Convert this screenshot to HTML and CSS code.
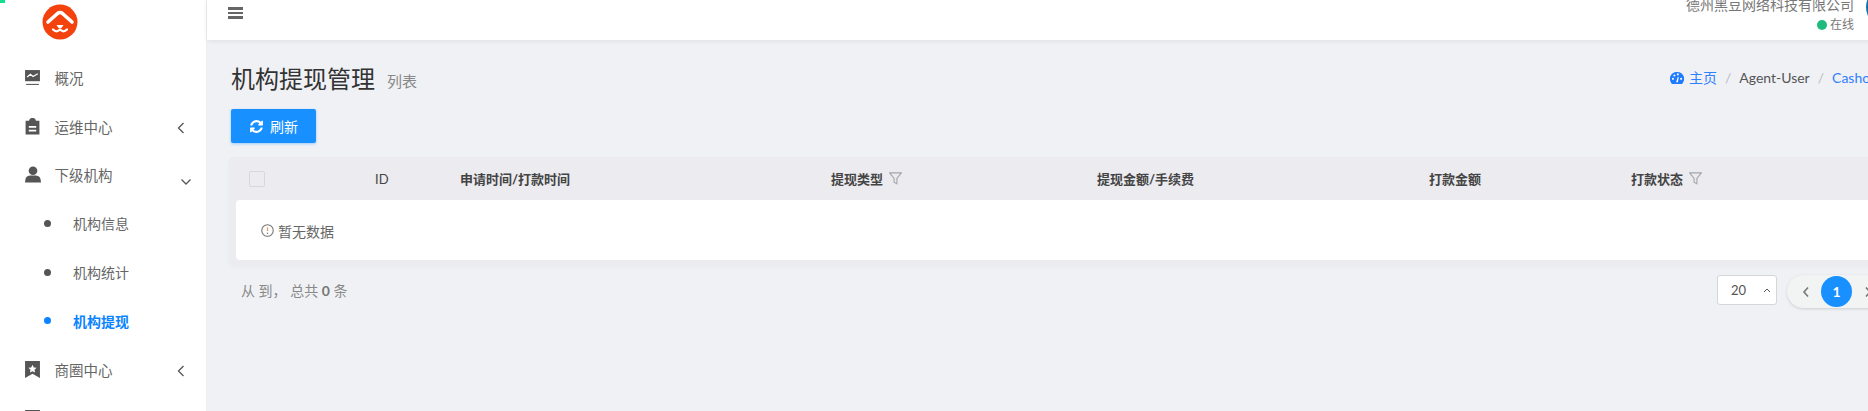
FILE: index.html
```html
<!DOCTYPE html>
<html>
  <head>
    <meta charset="utf-8" />
    <title>机构提现管理</title>
    <link rel="stylesheet" href="styles.css">
  </head>
  <body>
    <div class="progress-bar"></div>
    <div class="app">
      <aside class="sidebar">
        <div class="logo">
          <svg class="logo-mark" viewBox="0 0 36 36">
            <circle cx="18" cy="18" r="17.5" fill="#f4420f" />
            <path d="M6 18 L15.500 9.500 Q18 7.500 20.500 9.500 L30 18" fill="none" stroke="#fff" stroke-width="3.600" stroke-linecap="round" stroke-linejoin="round" />
            <path d="M14.500 21 h7 l-2 3 h-3 z" fill="#fff" />
            <path d="M11 25.500 q3.500 3.600 7 0 q3.500 3.600 7 0" fill="none" stroke="#fff" stroke-width="2.200" stroke-linecap="round" />
          </svg>
        </div>
        <ul class="menu">
          <li class="menu-item">
            <svg class="menu-icon" viewBox="0 0 16 16">
              <path d="M1 1h14v10.500H1z" fill="#555" />
              <path d="M3 7.500 L6 5 L8.500 7 L13 4.500" fill="none" stroke="#fff" stroke-width="1.200" />
              <path d="M2 14h12v1H2z" fill="#555" />
            </svg>
            <span class="menu-label">概况</span>
          </li>
          <li class="menu-item">
            <svg class="menu-icon" viewBox="0 0 16 16">
              <path d="M1.500 2.500h3.200a3.400 3.400 0 0 1 6.600 0h3.200v13h-13z" fill="#555" />
              <path d="M4.500 7.500h7v1.600h-7zM4.500 11h7v1.600h-7z" fill="#fff" />
            </svg>
            <span class="menu-label">运维中心</span>
            <svg class="chevron chevron-left" viewBox="0 0 8 12"><path d="M6.500 1 L1.500 6 L6.500 11" /></svg>
          </li>
          <li class="menu-item">
            <svg class="menu-icon menu-icon-user" viewBox="0 0 18 18">
              <circle cx="9" cy="5" r="4.600" fill="#555" />
              <path d="M0.500 17.500 q0-7.500 5.500-7.500 h6 q5.500 0 5.500 7.500z" fill="#555" />
            </svg>
            <span class="menu-label">下级机构</span>
            <svg class="chevron chevron-down" viewBox="0 0 12 8"><path d="M1.500 1.500 L6 6 L10.500 1.500" /></svg>
          </li>
          <li class="menu-item sub-item"><span class="dot"></span><span class="sub-label">机构信息</span></li>
          <li class="menu-item sub-item"><span class="dot"></span><span class="sub-label">机构统计</span></li>
          <li class="menu-item sub-item active"><span class="dot"></span><span class="sub-label">机构提现</span></li>
          <li class="menu-item">
            <svg class="menu-icon" viewBox="0 0 16 16">
              <path d="M1 0h14v16l-7-4-7 4z" fill="#555" />
              <path d="M8 3.500l1.200 2.500 2.700.3-2 1.900.5 2.700L8 9.600l-2.400 1.300.5-2.700-2-1.900 2.700-.3z" fill="#fff" />
            </svg>
            <span class="menu-label">商圈中心</span>
            <svg class="chevron chevron-left" viewBox="0 0 8 12"><path d="M6.500 1 L1.500 6 L6.500 11" /></svg>
          </li>
          <li class="menu-item">
            <svg class="menu-icon" viewBox="0 0 16 16"><path d="M1 0h14v16H1z" fill="#555" /></svg>
          </li>
        </ul>
      </aside>

      <div class="main">
        <header class="topbar">
          <div class="hamburger"><span></span><span></span><span></span></div>
          <div class="user-panel">
            <div class="user-info">
              <div class="company">德州黑豆网络科技有限公司</div>
              <div class="status"><span class="status-dot"></span>在线</div>
            </div>
            <div class="avatar"></div>
          </div>
        </header>

        <section class="content">
          <div class="page-head">
            <h1 class="page-title">机构提现管理</h1>
            <span class="page-sub">列表</span>
            <ol class="breadcrumb">
              <li class="crumb-link">
                <svg class="crumb-icon" viewBox="0 0 16 14">
                  <path d="M8 0a8 8 0 0 0-6.800 12.600l.8 1.400h12l.8-1.400A8 8 0 0 0 8 0z" fill="#1e7bff" />
                  <circle cx="3.200" cy="8" r="1.200" fill="#fff" />
                  <circle cx="5" cy="4" r="1.200" fill="#fff" />
                  <circle cx="9" cy="2.800" r="1.200" fill="#fff" />
                  <circle cx="12.800" cy="8" r="1.200" fill="#fff" />
                  <path d="M7 12 L9 5.500 L10 6 L9 12z" fill="#fff" />
                </svg>
                主页
              </li>
              <li class="crumb-sep">/</li>
              <li>Agent-User</li>
              <li class="crumb-sep">/</li>
              <li class="crumb-link">Cashout</li>
            </ol>
          </div>

          <button class="refresh-btn">
            <svg class="refresh-icon" viewBox="0 0 1792 1792">
              <path fill="#fff" d="M1639 1056q0 5-1 7-64 268-268 434.500t-478 166.500q-146 0-282.500-55t-243.500-157l-129 129q-19 19-45 19t-45-19-19-45v-448q0-26 19-45t45-19h448q26 0 45 19t19 45-19 45l-137 137q71 66 161 102t187 36q134 0 250-65t186-179q11-17 53-117 8-23 30-23h192q13 0 22.500 9.500t9.500 22.500zm25-800v448q0 26-19 45t-45 19h-448q-26 0-45-19t-19-45 19-45l138-138q-148-137-349-137-134 0-250 65t-186 179q-11 17-53 117-8 23-30 23h-199q-13 0-22.500-9.500t-9.500-22.500v-7q65-268 270-434.500t480-166.500q146 0 284 55.500t245 156.500l130-129q19-19 45-19t45 19 19 45z" />
            </svg>
            刷新
          </button>

          <div class="table-card">
            <div class="table-head">
              <div class="cell"><span class="checkbox"></span></div>
              <div class="cell cell-plain">ID</div>
              <div class="cell">申请时间/打款时间</div>
              <div class="cell">提现类型
                <svg class="funnel" viewBox="0 0 14 14"><path d="M.7 1h12.600L8.500 7v5.800l-3-1.800V7z" /></svg>
              </div>
              <div class="cell">提现金额/手续费</div>
              <div class="cell">打款金额</div>
              <div class="cell">打款状态
                <svg class="funnel" viewBox="0 0 14 14"><path d="M.7 1h12.600L8.500 7v5.800l-3-1.800V7z" /></svg>
              </div>
            </div>
            <div class="table-empty">
              <svg class="empty-icon" viewBox="0 0 12 12">
                <circle cx="6" cy="6" r="5.300" fill="none" stroke="#777" stroke-width="1" />
                <path d="M6 3v3.500" stroke="#e0a060" stroke-width="1.200" />
                <path d="M6 8v1.200" stroke="#777" stroke-width="1.200" />
              </svg>
              暂无数据
            </div>
          </div>

          <div class="table-foot">
            <div class="total">从 到， 总共 <b>0</b> 条</div>
            <div class="page-size">
              <span>20</span>
              <svg class="size-arrow" viewBox="0 0 8 5"><path d="M1 4 L4 1 L7 4" /></svg>
            </div>
            <div class="pager">
              <svg class="pager-arrow" viewBox="0 0 8 12"><path d="M6 1.500 L2 6 L6 10.500" /></svg>
              <span class="pager-num">1</span>
              <svg class="pager-arrow" viewBox="0 0 8 12"><path d="M2 1.500 L6 6 L2 10.500" /></svg>
            </div>
          </div>
        </section>
      </div>
    </div>
  </body>
</html>
```

FILE: styles.css
```css
* {
  box-sizing: border-box;
}

html,
body {
  margin: 0;
  height: 411px;
  overflow: hidden;
}

body {
  position: relative;
  background: #f0f1f5;
  color: #666;
  font-family: "Lato", "Noto Sans CJK SC", sans-serif;
  font-size: 14px;
}

.progress-bar {
  position: absolute;
  top: 0;
  left: 0;
  width: 5px;
  height: 3px;
  background: #10e08a;
  z-index: 10;
}

.app {
  display: flex;
  width: 1910px;
  height: 411px;
}

/* 左侧菜单 */
.sidebar {
  flex: none;
  width: 207px;
  height: 411px;
  overflow: hidden;
  background: #fff;
  border-right: 1px solid #eceef2;
}

.logo {
  height: 53px;
  padding: 4px 0 0 42px;
}

.logo-mark {
  display: block;
  width: 36px;
  height: 36px;
}

.menu {
  list-style: none;
  margin: 0;
  padding: 0;
}

.menu-item {
  display: flex;
  align-items: center;
  height: 48.7px;
  padding-left: 25px;
}

.menu-icon {
  flex: none;
  width: 17px;
  height: 17px;
  margin: 0 13.5px 0 -1px;
}

.menu-icon-user {
  width: 18px;
  margin: 0 12.5px 0 -1px;
}

.menu-label {
  font-size: 14.5px;
}

.chevron {
  fill: none;
  stroke: #555;
  stroke-width: 1.3;
}

.chevron-left {
  width: 8px;
  height: 12px;
  margin: 4px 0 0 64px;
}

.chevron-down {
  width: 12px;
  height: 8px;
  margin: 14px 0 0 67px;
}

.sub-item {
  padding-left: 44px;
}

.dot {
  width: 7px;
  height: 7px;
  margin-right: 22px;
  border-radius: 50%;
  background: #555;
}

.sub-label {
  font-size: 14px;
}

.sub-item.active .dot {
  background: #0a84ff;
}

.sub-item.active .sub-label {
  color: #0a84ff;
  font-weight: 700;
}

/* 顶部 */
.main {
  flex: 1;
  min-width: 0;
}

.topbar {
  display: flex;
  justify-content: space-between;
  height: 40px;
  padding-left: 21px;
  overflow: hidden;
  background: #fff;
  box-shadow: 0 1px 5px rgba(0, 0, 0, 0.08);
}

.hamburger {
  display: flex;
  flex-direction: column;
  gap: 2px;
  width: 15px;
  margin-top: 7px;
}

.hamburger span {
  height: 2.5px;
  background: #666;
}

.user-panel {
  display: flex;
  margin-right: 4px;
}

.user-info {
  margin-top: -4px;
  text-align: right;
  color: #777;
}

.company {
  line-height: 17px;
}

.status {
  display: flex;
  align-items: center;
  justify-content: flex-end;
  margin-top: 3px;
  font-size: 12px;
  line-height: 17px;
}

.status-dot {
  flex: none;
  width: 10px;
  height: 10px;
  margin-right: 3px;
  border-radius: 50%;
  background: #1fba7c;
}

.avatar {
  width: 40px;
  height: 40px;
  margin: -13px 0 0 12px;
  border-radius: 50%;
  background: #0f6fa8;
}

/* 内容 */
.content {
  padding: 20px 0 0 24px;
}

.page-head {
  display: flex;
  align-items: center;
  height: 34px;
}

.page-title {
  margin: 0;
  color: #333;
  font-size: 24px;
  font-weight: 400;
}

.page-sub {
  margin: 7px 0 0 12px;
  color: #888;
  font-size: 15px;
}

.breadcrumb {
  display: flex;
  align-items: center;
  list-style: none;
  margin: 0 27px 0 auto;
  padding: 0;
  color: #555;
}

.crumb-link {
  color: #2f80ff;
}

.crumb-icon {
  width: 14px;
  height: 12px;
  margin-right: 1px;
  vertical-align: -1px;
}

.crumb-sep {
  margin: 0 8px 0 8px;
  color: #bbb;
}

.refresh-btn {
  display: flex;
  align-items: center;
  justify-content: center;
  width: 85px;
  height: 34px;
  margin-top: 15px;
  padding: 0;
  border: 0;
  border-radius: 2px;
  background: #1890ff;
  color: #fff;
  font-family: inherit;
  font-size: 14px;
  box-shadow: 0 1px 3px rgba(24, 144, 255, 0.4);
}

.refresh-icon {
  width: 15px;
  height: 15px;
  margin-right: 6px;
}

.table-card {
  margin: 14px 0 0 -2px;
  padding: 0 7px 5px;
  border-radius: 4px;
  background: #ecebf0;
  box-shadow: 0 2px 4px rgba(0, 0, 0, 0.03);
}

.table-head {
  display: grid;
  grid-template-columns: 126px 85px 371px 266px 332px 202px 1fr;
  height: 43px;
  padding-left: 13px;
  color: #444;
  font-size: 13px;
  font-weight: 700;
}

.cell {
  display: flex;
  align-items: center;
}

.cell-plain {
  font-weight: 400;
}

.checkbox {
  width: 16px;
  height: 16px;
  border: 1px solid #d8d8d8;
  border-radius: 2px;
}

.funnel {
  width: 13px;
  height: 13px;
  margin-left: 6px;
  fill: none;
  stroke: #a4a7ad;
  stroke-width: 1.2;
}

.table-empty {
  display: flex;
  align-items: center;
  height: 60px;
  padding: 1px 0 0 25px;
  border-radius: 4px;
  background: #fff;
}

.empty-icon {
  width: 13px;
  height: 13px;
  margin-right: 4px;
}

.table-foot {
  display: flex;
  align-items: flex-start;
  margin-top: 10px;
}

.total {
  margin: -1px 0 0 10px;
  color: #888;
  line-height: 34px;
}

.total b {
  color: #777;
}

.page-size {
  display: flex;
  align-items: center;
  justify-content: space-between;
  width: 60px;
  height: 30px;
  margin-left: auto;
  padding: 0 5px 0 13px;
  border: 1px solid #d6d6d6;
  border-radius: 3px;
  background: #fff;
  color: #555;
  font-size: 13px;
}

.size-arrow {
  width: 8px;
  height: 5px;
  fill: none;
  stroke: #555;
  stroke-width: 1;
}

.pager {
  display: flex;
  align-items: center;
  width: 123px;
  height: 33px;
  margin-left: 10px;
  padding-left: 15px;
  border-radius: 17px;
  background: #f2f3f3;
  box-shadow: 0 1px 3px rgba(0, 0, 0, 0.15);
}

.pager-arrow {
  width: 8px;
  height: 12px;
  fill: none;
  stroke: #777;
  stroke-width: 1.6;
}

.pager-num {
  width: 31px;
  height: 31px;
  margin: 0 12px 0 11px;
  border-radius: 50%;
  background: #1890ff;
  color: #fff;
  font-weight: 700;
  line-height: 31px;
  text-align: center;
}
```
